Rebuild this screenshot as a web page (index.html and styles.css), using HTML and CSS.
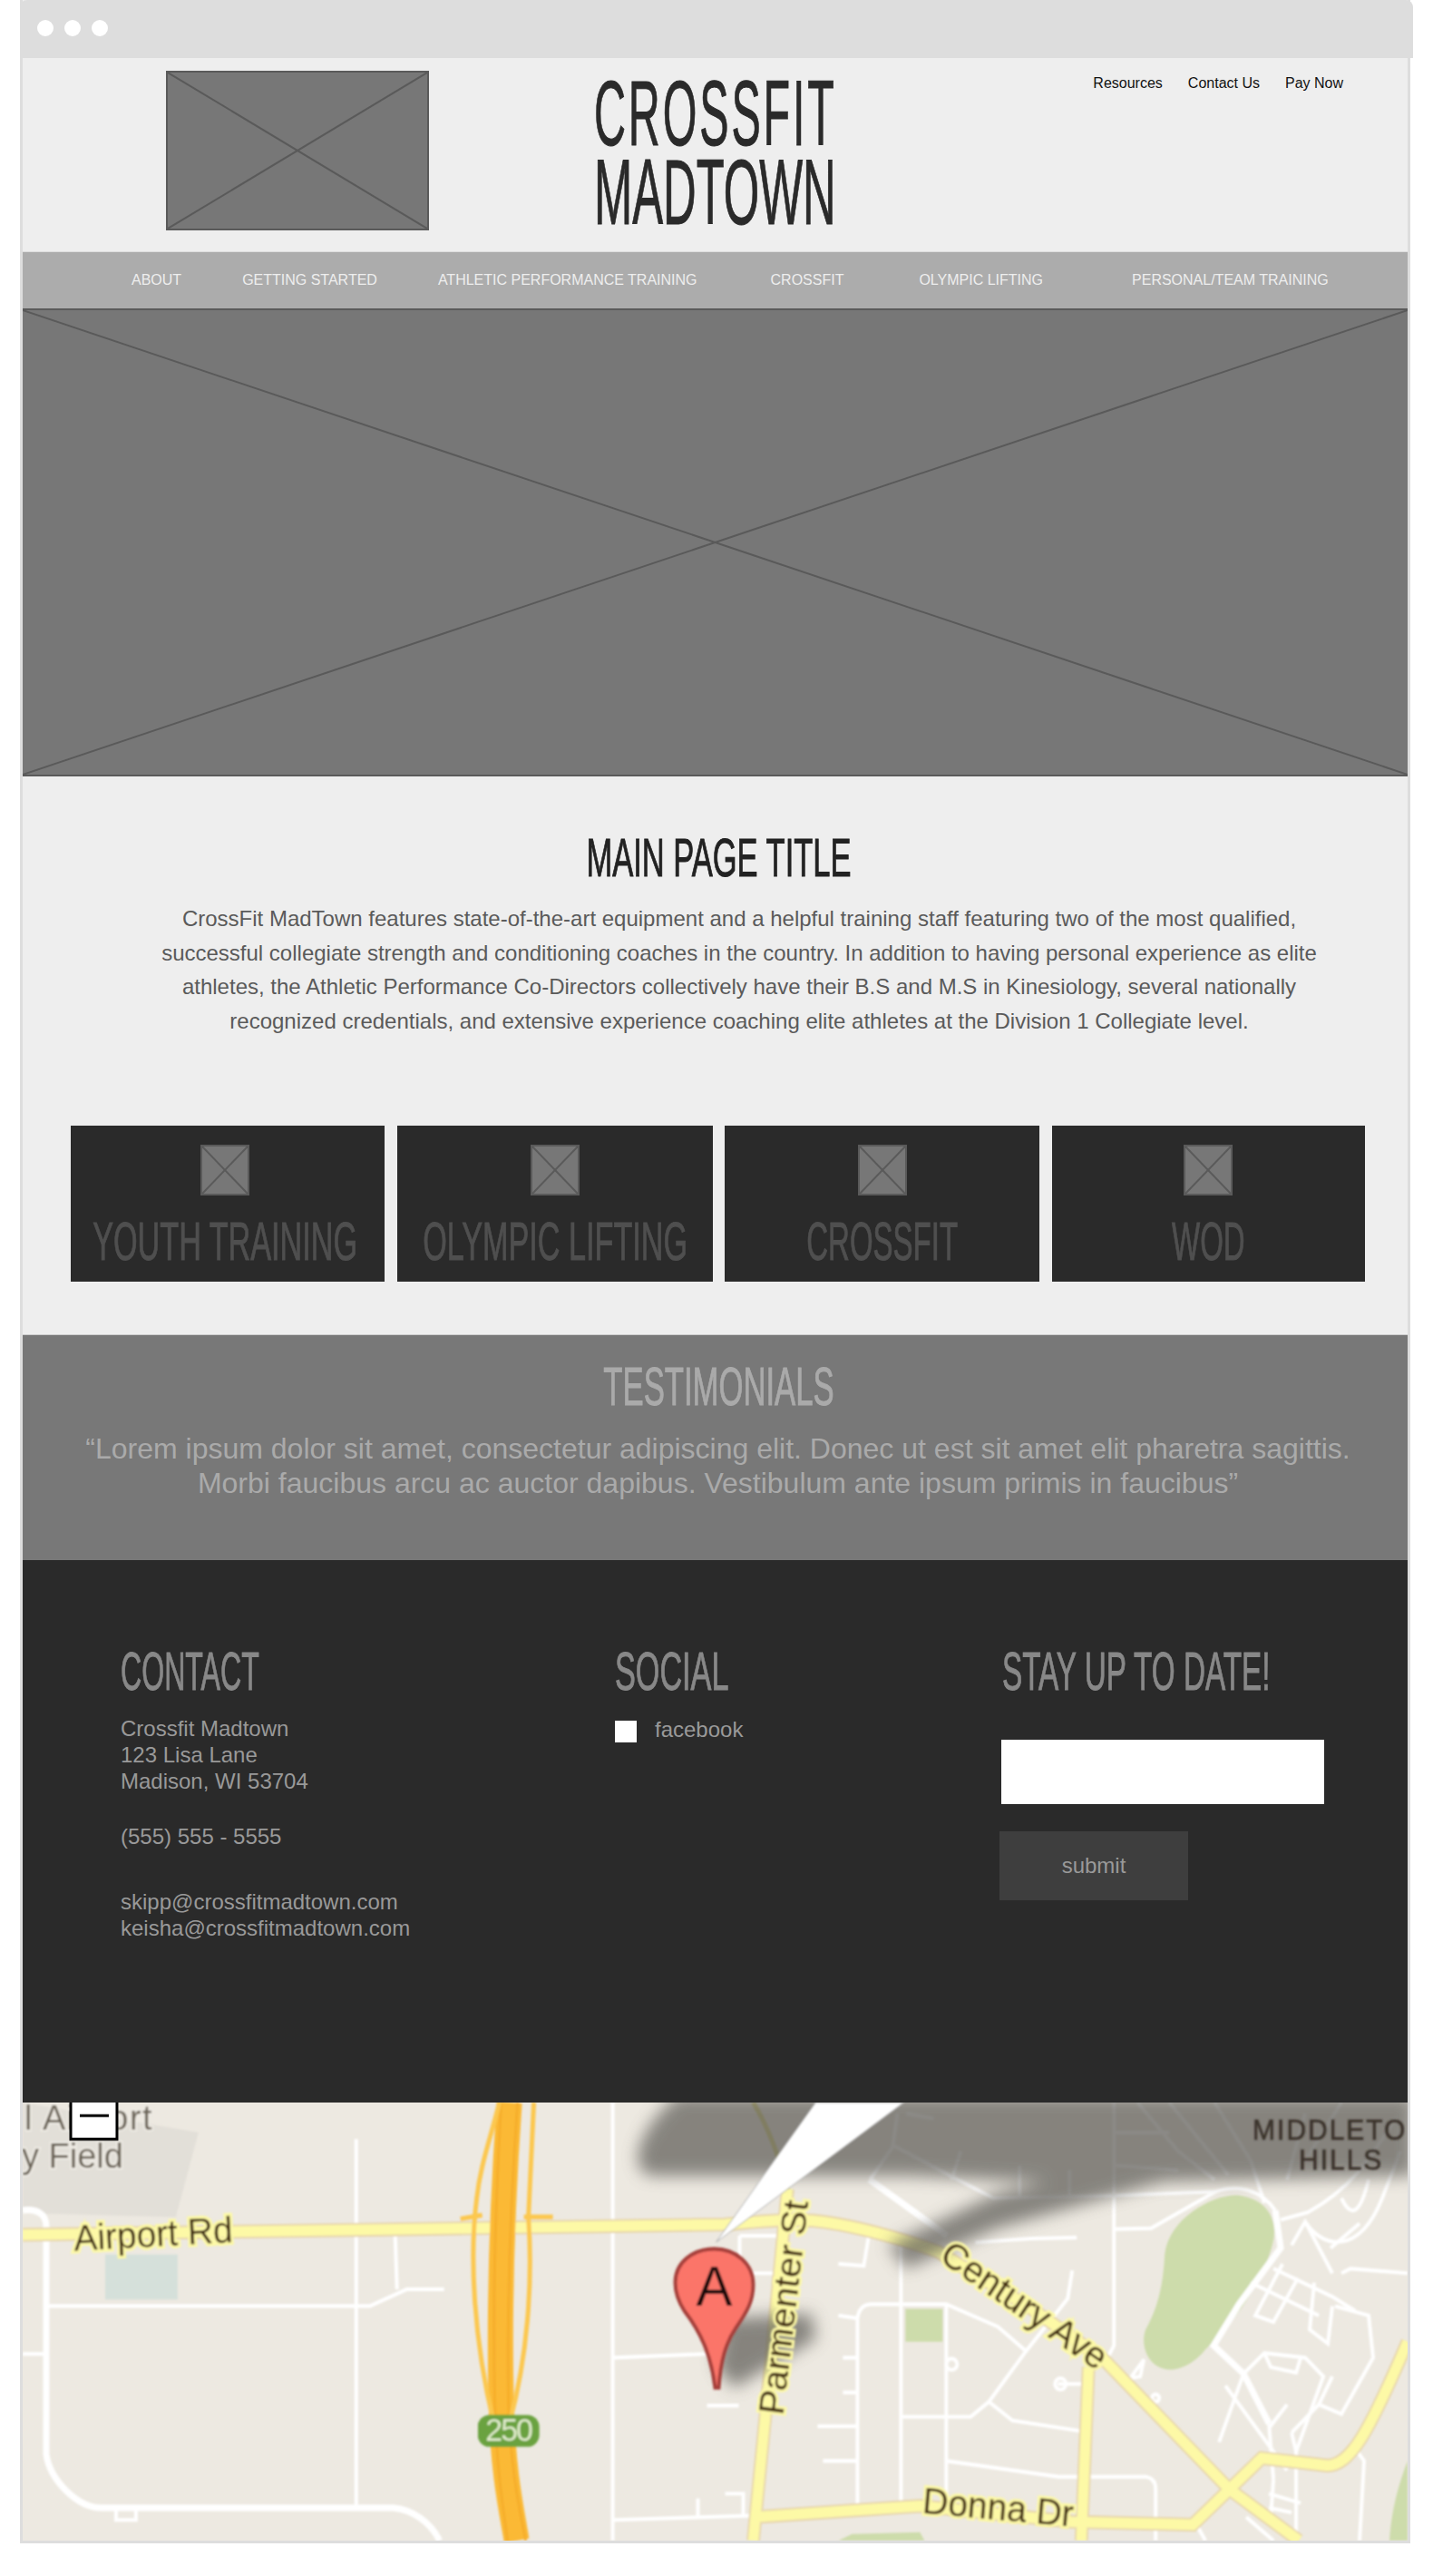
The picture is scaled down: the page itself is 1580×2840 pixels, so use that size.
FILE: index.html
```html
<!DOCTYPE html>
<html lang="en">
<head>
  <meta charset="UTF-8" />
  <title>Crossfit Madtown</title>
  <link rel="stylesheet" href="styles.css">
</head>
<body>

  <div class="browser">
    <div class="browser-bar">
      <span class="dot"></span>
      <span class="dot"></span>
      <span class="dot"></span>
    </div>

    <header class="site-header">
      <div class="placeholder logo-image">
        <svg viewBox="0 0 100 100" preserveAspectRatio="none"><line x1="0" y1="0" x2="100" y2="100"/><line x1="100" y1="0" x2="0" y2="100"/></svg>
      </div>
      <div class="brand">
        <span class="brand-line brand-top">CROSSFIT</span>
        <span class="brand-line brand-bottom">MADTOWN</span>
      </div>
      <nav class="util-links">
        <a>Resources</a>
        <a>Contact Us</a>
        <a>Pay Now</a>
      </nav>
    </header>

    <nav class="main-nav">
      <a class="nav-about">ABOUT</a>
      <a class="nav-started">GETTING STARTED</a>
      <a class="nav-athletic">ATHLETIC PERFORMANCE TRAINING</a>
      <a class="nav-crossfit">CROSSFIT</a>
      <a class="nav-olympic">OLYMPIC LIFTING</a>
      <a class="nav-personal">PERSONAL/TEAM TRAINING</a>
    </nav>

    <div class="placeholder hero-image">
      <svg viewBox="0 0 100 100" preserveAspectRatio="none"><line x1="0" y1="0" x2="100" y2="100"/><line x1="100" y1="0" x2="0" y2="100"/></svg>
    </div>

    <section class="intro">
      <h1 class="cond page-title">MAIN PAGE TITLE</h1>
      <p class="intro-text">CrossFit MadTown features state-of-the-art equipment and a helpful training staff featuring two of the most qualified,<br>successful collegiate strength and conditioning coaches in the country. In addition to having personal experience as elite<br>athletes, the Athletic Performance Co-Directors collectively have their B.S and M.S in Kinesiology, several nationally<br>recognized credentials, and extensive experience coaching elite athletes at the Division 1 Collegiate level.</p>

      <div class="cards">
        <div class="card">
          <div class="placeholder card-icon"><svg viewBox="0 0 100 100" preserveAspectRatio="none"><line x1="0" y1="0" x2="100" y2="100"/><line x1="100" y1="0" x2="0" y2="100"/></svg></div>
          <h3 class="cond card-label">YOUTH TRAINING</h3>
        </div>
        <div class="card">
          <div class="placeholder card-icon"><svg viewBox="0 0 100 100" preserveAspectRatio="none"><line x1="0" y1="0" x2="100" y2="100"/><line x1="100" y1="0" x2="0" y2="100"/></svg></div>
          <h3 class="cond card-label">OLYMPIC LIFTING</h3>
        </div>
        <div class="card">
          <div class="placeholder card-icon"><svg viewBox="0 0 100 100" preserveAspectRatio="none"><line x1="0" y1="0" x2="100" y2="100"/><line x1="100" y1="0" x2="0" y2="100"/></svg></div>
          <h3 class="cond card-label card-label-short">CROSSFIT</h3>
        </div>
        <div class="card">
          <div class="placeholder card-icon"><svg viewBox="0 0 100 100" preserveAspectRatio="none"><line x1="0" y1="0" x2="100" y2="100"/><line x1="100" y1="0" x2="0" y2="100"/></svg></div>
          <h3 class="cond card-label card-label-short">WOD</h3>
        </div>
      </div>
    </section>

    <section class="testimonials">
      <h2 class="cond testimonials-title">TESTIMONIALS</h2>
      <p class="quote">“Lorem ipsum dolor sit amet, consectetur adipiscing elit. Donec ut est sit amet elit pharetra sagittis.<br>Morbi faucibus arcu ac auctor dapibus. Vestibulum ante ipsum primis in faucibus”</p>
    </section>

    <footer class="site-footer">
      <div class="footer-col">
        <h2 class="cond footer-title">CONTACT</h2>
        <p class="address">Crossfit Madtown<br>123 Lisa Lane<br>Madison, WI 53704</p>
        <p class="phone">(555) 555 - 5555</p>
        <p class="emails">skipp@crossfitmadtown.com<br>keisha@crossfitmadtown.com</p>
      </div>
      <div class="footer-col">
        <h2 class="cond footer-title title-social">SOCIAL</h2>
        <div class="social-row">
          <span class="social-box"></span>
          <span>facebook</span>
        </div>
      </div>
      <div class="footer-col">
        <h2 class="cond footer-title title-stay">STAY UP TO DATE!</h2>
        <form class="signup">
          <input type="text" class="signup-input" />
          <button type="button" class="signup-button">submit</button>
        </form>
      </div>
    </footer>

    <div class="map">
      <svg class="map-svg" viewBox="25 2318 1528 467" preserveAspectRatio="none">
        <defs>
          <filter id="soft"><feGaussianBlur stdDeviation="0.8"/></filter>
          <filter id="shade" x="-20%" y="-20%" width="140%" height="140%"><feGaussianBlur stdDeviation="9"/></filter>
        </defs>
        <rect x="25" y="2318" width="1528" height="467" fill="#ede9e1"/>

        <g filter="url(#soft)">
          <!-- land areas -->
          <polygon points="25,2318 219,2350 194,2440 25,2436" fill="#e2dfd8"/>
          <rect x="116" y="2480" width="80" height="48" fill="#d5e0da"/>
          <path d="M1367 2417 C1395 2420 1410 2440 1405 2465 C1395 2510 1355 2560 1331 2580 C1315 2600 1295 2605 1285 2602 C1265 2598 1258 2575 1264 2560 C1275 2540 1283 2520 1285 2480 C1290 2440 1340 2415 1367 2417 Z" fill="#cddcab"/>
          <rect x="999" y="2538" width="41" height="35" fill="#cddcab"/>
          <path d="M925 2785 L940 2778 L1015 2776 L1020 2785 Z" fill="#cddcab"/>
          <path d="M1533 2785 C1535 2750 1545 2720 1553 2700 L1553 2785 Z" fill="#cddcab"/>

          <!-- white streets -->
          <g class="street">
            <path class="street-wide" d="M25 2433 C40 2431 51 2436 51 2450 L51 2693 C55 2720 85 2750 112 2750 L434 2750 C455 2752 475 2765 485 2785"/>
            <path d="M51 2535 L408 2535 L449 2517 L490 2517"/>
            <path d="M393 2357 L393 2747"/>
            <path d="M436 2460 L438 2517"/>
            <path d="M25 2586 L51 2586"/>
            <path d="M128 2750 L128 2763 L150 2763 L150 2750"/>
            <path d="M676 2318 L676 2785"/>
            <path d="M676 2590 L780 2586"/>
            <path d="M676 2763 L840 2758"/>
            <path d="M770 2740 L770 2760 M800 2735 L820 2735 L820 2760"/>
            <path d="M780 2641 L815 2641"/>

            <path d="M816 2460 L865 2460 M816 2460 L816 2500 M816 2500 L862 2500"/>
            <path d="M959 2457 L953 2492 L925 2490"/>
            <path class="street-wide" d="M959 2400 L1045 2460"/>
            <path d="M1076 2467 L1137 2463 L1188 2462"/>
            <path d="M984 2363 L1096 2420 L1229 2417 L1341 2413 C1365 2405 1390 2410 1407 2433"/>
            <path d="M990 2330 L985 2365 L960 2400"/>
            <path d="M1229 2318 L1229 2577 L1222 2590"/>
            <path d="M1229 2453 L1270 2452 L1341 2413"/>

            <path d="M994 2470 L994 2747"/>
            <path d="M1044 2533 L1044 2743"/>
            <path d="M946 2747 L946 2548 Q948 2534 960 2533 L1044 2533 L1101 2557 L1132 2583"/>
            <path d="M1183 2497 L1178 2527 L1132 2583 L1091 2637 L1071 2653 L994 2653"/>
            <path d="M1091 2637 L1117 2657 L1191 2668"/>
            <path d="M1044 2700 L1168 2717 L1265 2717 Q1275 2719 1275 2730 L1275 2785"/>
            <path d="M902 2663 L946 2663 M908 2700 L946 2700 M930 2590 L946 2590 M930 2627 L946 2627 M925 2545 L946 2548"/>
            <path d="M1167 2618 L1195 2618"/>
            <circle cx="1050" cy="2597" r="6"/>
            <circle cx="1170" cy="2618" r="6"/>
            <path d="M1247 2612 L1262 2592 L1258 2610 Z"/>
            <circle cx="1275" cy="2633" r="4"/>

            <path class="street-wide" d="M1407 2433 L1413 2473 L1367 2533 L1339 2577 L1372 2607 L1400 2660"/>
            <path d="M1413 2443 L1443 2435 C1490 2410 1510 2380 1540 2335"/>
            <path d="M1425 2470 L1440 2445 C1460 2475 1500 2480 1525 2420 L1545 2370"/>
            <path d="M1440 2445 L1470 2500 M1468 2473 L1500 2447"/>
            <path d="M1480 2420 C1490 2440 1500 2440 1510 2400"/>
            <path d="M1380 2510 L1455 2545 M1405 2495 L1470 2525 L1495 2540"/>
            <path d="M1415 2490 L1385 2545 L1405 2552 L1432 2505"/>
            <path d="M1450 2510 L1445 2560 L1465 2575 L1470 2535"/>
            <path d="M1480 2500 L1490 2495 L1553 2500"/>
            <path d="M1473 2535 L1510 2545 L1515 2590 L1480 2650 L1455 2640 L1470 2610"/>
            <path d="M1372 2607 L1395 2585 L1440 2590 L1460 2610 L1430 2690"/>
            <path d="M1395 2585 L1402 2600 L1430 2606 L1435 2590"/>
            <path d="M1352 2620 L1420 2710 M1345 2680 L1372 2607"/>
            <path d="M1400 2660 L1405 2720 M1420 2640 L1400 2665 M1455 2640 L1425 2670"/>
            <path d="M1425 2670 L1430 2690 L1430 2785"/>
            <path d="M1490 2680 L1505 2700 L1500 2785"/>
            <path d="M1375 2760 L1405 2785"/>
            <path d="M1400 2735 L1435 2745 M1400 2750 L1425 2755 M1405 2720 L1402 2760"/>
            <path d="M1320 2768 L1330 2785"/>
            <path d="M1255 2318 L1300 2370 L1340 2400 M1290 2318 L1355 2395 M1229 2350 L1290 2350 M1229 2385 L1300 2390 M1340 2318 L1380 2380 L1395 2425 M1440 2330 L1420 2400 M1480 2318 L1440 2380"/>
            <path d="M1000 2330 L1030 2335 M1060 2370 L1050 2400 M1125 2385 L1125 2420 M1180 2390 L1180 2420"/>
          </g>

          <!-- yellow roads -->
          <g class="road-edge">
            <path d="M25 2459 L800 2448 C840 2444 870 2442 897 2444 C940 2448 990 2462 1035 2477 L1137 2537 L1219 2593 L1356 2730 L1433 2785"/>
            <path d="M869 2410 L831 2785"/>
            <path d="M831 2760 L1015 2748 L1183 2765 L1316 2768 L1392 2697 L1464 2705 C1490 2705 1510 2670 1553 2573"/>
            <path d="M1201 2600 L1193 2785"/>
          </g>
          <g class="road">
            <path d="M25 2459 L800 2448 C840 2444 870 2442 897 2444 C940 2448 990 2462 1035 2477 L1137 2537 L1219 2593 L1356 2730 L1433 2785"/>
            <path d="M869 2410 L831 2785"/>
            <path d="M831 2760 L1015 2748 L1183 2765 L1316 2768 L1392 2697 L1464 2705 C1490 2705 1510 2670 1553 2573"/>
            <path d="M1201 2600 L1193 2785"/>
          </g>
          <path d="M831 2318 C845 2340 858 2370 869 2410" fill="none" stroke="#d9d27c" stroke-width="5"/>

          <!-- highway 250 -->
          <g class="highway">
            <path class="highway-main" d="M562 2318 C556 2400 550 2520 553 2640 C555 2715 565 2755 570 2785"/>
            <path class="highway-stripe" d="M553 2318 C548 2400 543 2520 546 2640 C548 2715 556 2755 560 2785"/>
            <path class="highway-stripe" d="M571 2318 C565 2400 559 2520 561 2640 C564 2715 574 2755 580 2785"/>
            <path d="M551 2318 C540 2360 530 2385 526 2420 C518 2480 522 2570 545 2660"/>
            <path d="M589 2318 L583 2440 C588 2510 582 2590 562 2660"/>
            <path d="M508 2442 L532 2438 M578 2440 L610 2440"/>
          </g>
        </g>

        <!-- balloon and pin shadows -->
        <g class="shadow" filter="url(#shade)">
          <path d="M748 2310 L1560 2310 L1560 2396 L1290 2402 L1180 2404 L1000 2396 L718 2396 C693 2390 700 2350 748 2310 Z"/>
          <path d="M1300 2398 L1100 2452 L1000 2495 L980 2470 L1100 2415 L1200 2392 Z"/>
          <path d="M800 2548 L895 2543 L900 2570 L810 2622 L790 2600 Z"/>
        </g>

        <g filter="url(#soft)">
          <!-- balloon tail -->
          <polygon points="900,2318 997,2318 790,2467" fill="#fff" stroke="#bbb" stroke-width="1"/>
          <!-- labels -->
          <text class="label-airport label-airport-top" x="27" y="2347">l Airport</text>
          <text class="label-airport" x="24" y="2388">y Field</text>
          <text class="road-label" transform="translate(82 2476) rotate(-3)">Airport Rd</text>
          <text class="road-label" transform="translate(864 2652) rotate(-83)">Parmenter St</text>
          <text class="road-label" transform="translate(1035 2486) rotate(34)">Century Ave</text>
          <text class="road-label" transform="translate(1017 2756) rotate(5)">Donna Dr</text>
          <text class="area-label" x="1382" y="2358">MIDDLETO</text>
          <text class="area-label" x="1433" y="2390">HILLS</text>
          <!-- 250 shield -->
          <rect x="527" y="2651" width="68" height="34" rx="13" fill="#6aa23f"/>
          <text class="shield-label" x="561" y="2679">250</text>
          <!-- pin -->
          <path d="M789 2622 C785 2590 775 2565 755 2540 C747 2528 745 2518 745 2510 C745 2488 765 2474 788 2474 C812 2474 831 2490 831 2512 C831 2530 824 2541 812 2558 C800 2575 795 2595 793 2622 Z" fill="#fb7469" stroke="#a63f3b" stroke-width="4"/>
          <text class="pin-label" x="788" y="2535">A</text>
        </g>

        <!-- zoom control -->
        <rect class="zoom-box" x="78" y="2312" width="51" height="45"/>
        <line class="zoom-minus" x1="88" y1="2332" x2="120" y2="2332"/>
      </svg>
    </div>
  </div>

</body>
</html>
```

FILE: styles.css
```css
* {
  box-sizing: border-box;
}

body {
  margin: 0;
  background: white;
  font-family: "Liberation Sans", Arial, sans-serif;
}

h1, h2, h3, p {
  margin: 0;
  font-weight: normal;
}

.browser {
  width: 1533px;
  margin-left: 22px;
  border: 3px solid #ddd;
  border-top: none;
  background: #eee;
}

.browser-bar {
  height: 64px;
  margin: 0 -6px 0 -3px;
  padding: 22px 0 0 19px;
  display: flex;
  gap: 12px;
  background: #ddd;
  border-radius: 8px 8px 0 0;
}

.dot {
  width: 18px;
  height: 18px;
  border-radius: 50%;
  background: white;
}

/* grey boxes with a cross */
.placeholder {
  background: #777;
  border: 2px solid #5a5a5a;
}

.placeholder svg {
  display: block;
  width: 100%;
  height: 100%;
}

.placeholder line {
  stroke: #5a5a5a;
  stroke-width: 2px;
  vector-effect: non-scaling-stroke;
}

.site-header {
  height: 213px;
  padding: 14px 71px 0 158px;
  display: flex;
  align-items: flex-start;
}

.logo-image {
  width: 290px;
  height: 176px;
  flex: none;
}

.brand {
  width: 400px;
  margin: 4px 0 0 182px;
  flex: none;
  color: #2a2a2a;
  font-size: 102px;
  line-height: 87px;
  -webkit-text-stroke: 1px #2a2a2a;
}

.brand-line {
  display: block;
  width: 400px;
  white-space: nowrap;
  transform-origin: left center;
}

.brand-top {
  letter-spacing: 6px;
  transform: scaleX(0.475);
}

.brand-bottom {
  transform: scaleX(0.497);
}

.util-links {
  margin: 4px 0 0 auto;
  display: flex;
  gap: 28px;
  font-size: 16px;
  line-height: 20px;
  color: #111;
}

.main-nav {
  height: 63px;
  padding: 0 0 1px 120px;
  display: flex;
  align-items: center;
  background: #acacac;
  border-top: 1px solid #ddd;
  color: #eee;
  font-size: 16px;
}

.nav-started { margin-left: 67px; }
.nav-athletic { margin-left: 67px; }
.nav-crossfit { margin-left: 81px; }
.nav-olympic { margin-left: 83px; }
.nav-personal { margin-left: 98px; }

.hero-image {
  height: 516px;
  border-width: 2px 0;
}

.intro {
  height: 615px;
  padding-top: 60px;
}

.cond {
  font-size: 60px;
  line-height: 60px;
  white-space: nowrap;
  -webkit-text-stroke: 1px currentColor;
}

.page-title {
  margin-left: 8px;
  color: #222;
  text-align: center;
  transform: scaleX(0.575);
}

.intro-text {
  width: 1300px;
  margin: 18px 0 0 140px;
  color: #5a5a5a;
  font-size: 24px;
  line-height: 37.7px;
  text-align: center;
}

.cards {
  margin: 96px 0 0 53px;
  display: grid;
  grid-template-columns: 346px 348px 347px 345px;
  gap: 13.67px;
}

.card {
  height: 172px;
  padding-top: 21px;
  background: #2a2a2a;
  display: flex;
  flex-direction: column;
  align-items: center;
}

.card:first-child {
  padding-right: 6px;
}

.card-icon {
  width: 54px;
  height: 56px;
  flex: none;
}

.card-label {
  margin-top: 21px;
  color: #4f4f4f;
  transform: scaleX(0.57);
}

.card-label-short {
  transform: scaleX(0.55);
}

.testimonials {
  height: 249px;
  padding-top: 27px;
  background: #787878;
  border-top: 1px solid #ccc;
  text-align: center;
}

.testimonials-title {
  margin-left: 8px;
  color: #aaa;
  transform: scaleX(0.578);
}

.quote {
  margin-top: 19px;
  padding-left: 6px;
  color: #aaa;
  font-size: 32px;
  line-height: 38px;
}

.site-footer {
  height: 598px;
  padding: 93px 0 0 108px;
  display: grid;
  grid-template-columns: 545px 424px 1fr;
  background: #2a2a2a;
  color: #999;
  font-size: 24px;
  line-height: 29px;
}

.footer-title {
  color: #888;
  transform-origin: left center;
  transform: scaleX(0.535);
}

.title-social {
  transform: scaleX(0.57);
}

.title-stay {
  margin-left: 3px;
  transform: scaleX(0.555);
}

.address {
  margin-top: 18px;
}

.phone {
  margin-top: 32px;
}

.emails {
  margin-top: 43px;
}

.social-row {
  margin-top: 24px;
  display: flex;
  gap: 20px;
  line-height: 20px;
}

.social-box {
  width: 24px;
  height: 24px;
  background: white;
}

.signup {
  margin-top: 45px;
}

.signup-input {
  display: block;
  width: 356px;
  height: 71px;
  margin-left: 2px;
  border: none;
  background: white;
}

.signup-button {
  display: block;
  width: 208px;
  height: 76px;
  margin-top: 30px;
  padding-bottom: 3px;
  border: none;
  background: #3e3e3e;
  color: #999;
  font: inherit;
}

.map {
  height: 483px;
  overflow: hidden;
}

.map-svg {
  display: block;
  width: 100%;
  height: 100%;
}

.street {
  fill: none;
  stroke: #fff;
  stroke-width: 4;
}

.street-wide {
  stroke-width: 7;
}

.highway {
  fill: none;
  stroke: #fcc84f;
  stroke-width: 5;
}

.highway .highway-main {
  stroke: #fbb935;
  stroke-width: 28;
}

.highway .highway-stripe {
  stroke: #f6ae2c;
  stroke-width: 3;
}

.road-edge {
  fill: none;
  stroke: #e8d7ad;
  stroke-width: 15;
}

.road {
  fill: none;
  stroke: #fdf9a6;
  stroke-width: 11;
}

.shadow {
  fill: #5e5d58;
  opacity: 0.72;
}

.road-label {
  font-size: 39px;
  fill: #3f2a0a;
  stroke: #fdf9a6;
  stroke-width: 6px;
  paint-order: stroke;
}

.label-airport {
  font-size: 38px;
  fill: #6b6357;
  stroke: #eeebe4;
  stroke-width: 4px;
  paint-order: stroke;
}

.label-airport-top {
  letter-spacing: 1.5px;
}

.area-label {
  font-size: 30px;
  letter-spacing: 2px;
  fill: #3b332b;
  stroke: #3b332b;
  stroke-width: 0.6px;
}

.shield-label {
  font-size: 34px;
  fill: #dfeacb;
  text-anchor: middle;
  letter-spacing: -2px;
}

.pin-label {
  font-size: 60px;
  fill: #1c0a08;
  text-anchor: middle;
}

.zoom-box {
  fill: white;
  stroke: black;
  stroke-width: 3;
}

.zoom-minus {
  stroke: black;
  stroke-width: 3;
}
```
